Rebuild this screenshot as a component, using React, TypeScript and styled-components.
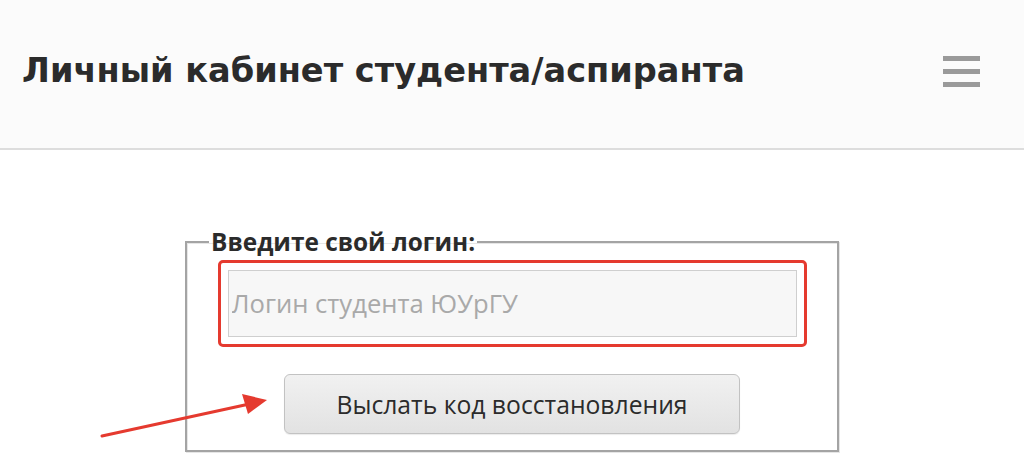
import React from 'react';
import styled, { createGlobalStyle } from 'styled-components';

const GlobalStyle = createGlobalStyle`
  html, body {
    margin: 0;
    padding: 0;
    background: #ffffff;
  }
  body {
    font-family: "Open Sans", "Noto Sans", sans-serif;
    color: #333;
  }
`;

export default function App() {
  return (
    <>
      <GlobalStyle />
      <Page>
        <Header>
          <Title>Личный кабинет студента/аспиранта</Title>
          <MenuButton aria-label="menu">
            <MenuBar />
            <MenuBar />
            <MenuBar />
          </MenuButton>
        </Header>

        <Content>
          <LoginBox>
            <Legend>Введите свой логин:</Legend>
            <Highlight>
              <LoginInput placeholder="Логин студента ЮУрГУ" />
            </Highlight>
            <SendButton>Выслать код восстановления</SendButton>
          </LoginBox>

          {/* red annotation arrow pointing at the button */}
          <Arrow width="180" height="50" viewBox="0 0 180 50">
            <line x1="8" y1="44" x2="160" y2="11" stroke="#e53a2f" strokeWidth="3" strokeLinecap="round" />
            <polygon points="173,8 148,2 154,22" fill="#e53a2f" />
          </Arrow>
        </Content>
      </Page>
    </>
  );
}

const Page = styled.div`
  width: 1024px;
  height: 460px;
  overflow: hidden;
`

const Header = styled.header`
  display: flex;
  align-items: center;
  justify-content: space-between;
  height: 150px;
  padding: 0 44px 0 22px;
  box-sizing: border-box;
  background: #fbfbfb;
  border-bottom: 2px solid #dddddd;
`

const Title = styled.h1`
  margin: 0 0 8px 0;
  font-family: "DejaVu Sans", Verdana, sans-serif;
  font-weight: bold;
  font-size: 33.6px;
  color: #2b2b2b;
  letter-spacing: 0;
`

const MenuButton = styled.div`
  display: flex;
  flex-direction: column;
  gap: 8px;
  width: 37px;
  margin-bottom: 6px;
`

const MenuBar = styled.span`
  display: block;
  height: 5px;
  background: #9a9a9a;
`

const Content = styled.main`
  position: relative;
  display: flex;
  justify-content: center;
  padding-top: 78px;
`

const LoginBox = styled.fieldset`
  width: 654px;
  box-sizing: border-box;
  margin: 0;
  padding: 4px 0 16px 0;
  border: 2px solid #a4a4a4;
  box-shadow: inset 1px 1px 0 #e6e6e6, 1px 1px 0 #e6e6e6;
  display: flex;
  flex-direction: column;
  align-items: center;
`

const Legend = styled.legend`
  padding: 0 2px;
  margin-left: 22px;
  font-family: "Open Sans", sans-serif;
  font-weight: bold;
  font-size: 24.4px;
  color: #2b2b2b;
  line-height: 28px;
`

const Highlight = styled.div`
  width: 589px;
  box-sizing: border-box;
  padding: 7px;
  border: 3px solid #e53a2f;
  border-radius: 5px;
`

const LoginInput = styled.input`
  display: block;
  width: 100%;
  box-sizing: border-box;
  height: 67px;
  padding: 0 3px;
  border: 1px solid #cfcfcf;
  background: #f7f7f7;
  font-family: "Open Sans", sans-serif;
  font-size: 25.6px;
  color: #333;
  outline: none;

  &::placeholder {
    color: #a9a9a9;
  }
`

const SendButton = styled.button`
  margin-top: 27px;
  width: 456px;
  height: 60px;
  border: 1px solid #c2c2c2;
  border-radius: 6px;
  background: linear-gradient(#f1f1f1, #e2e2e2);
  font-family: "Open Sans", sans-serif;
  font-size: 24.7px;
  color: #2b2b2b;
  box-shadow: 0 1px 1px rgba(0, 0, 0, 0.08);
`

const Arrow = styled.svg`
  position: absolute;
  left: 94px;
  top: 242px;
`
